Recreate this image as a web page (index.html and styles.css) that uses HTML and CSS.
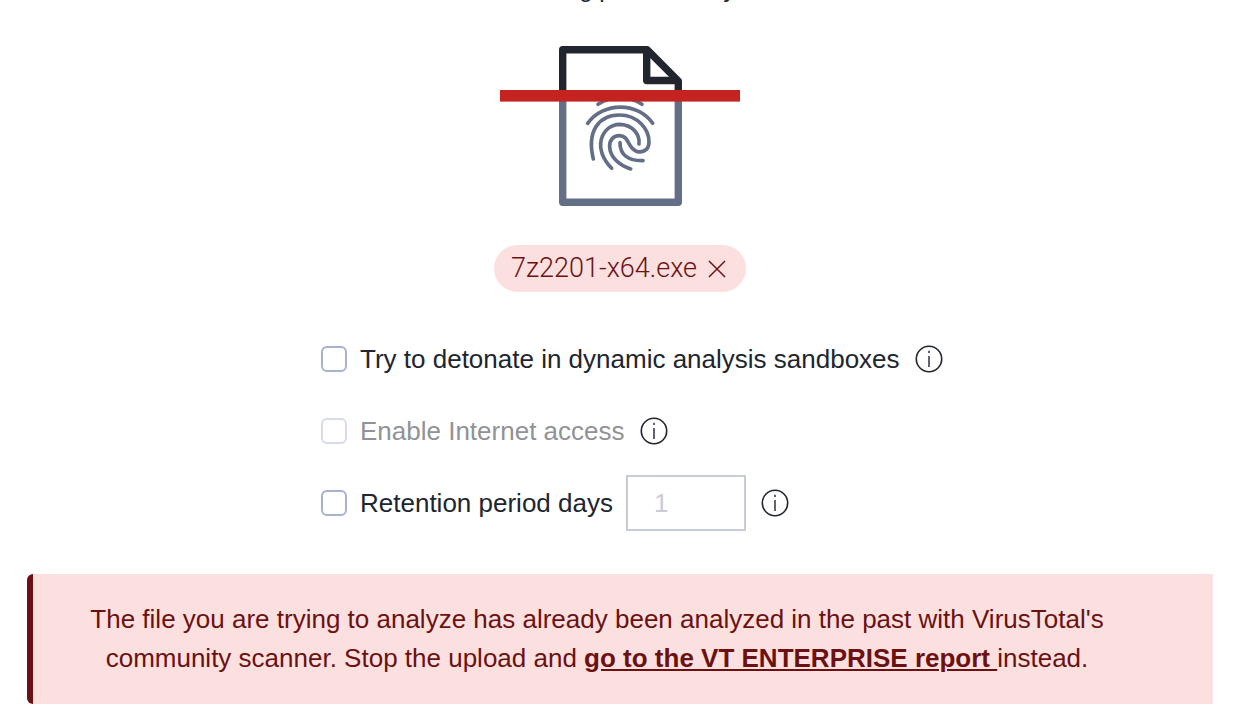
FILE: index.html
```html
<!DOCTYPE html>
<html lang="en">
<head>
    <meta charset="UTF-8">
    <meta name="viewport" content="width=device-width, initial-scale=1.0">
    <title>Private Scanning</title>
    <link rel="stylesheet" href="styles.css">
</head>
<body>
    <!-- Shared icons -->
    <svg class="sprite" aria-hidden="true">
        <symbol id="icon-info" viewBox="0 0 28 28">
            <circle cx="14" cy="14" r="12.7" fill="none" stroke="currentColor" stroke-width="1.6"/>
            <path d="M14 11V22M14 5.8V8" stroke="currentColor" stroke-width="1.4"/>
        </symbol>
    </svg>

    <main class="upload">
        <p class="upload-title">Performing private analysis</p>

        <svg class="scan-icon" viewBox="0 0 240 160" fill="none" aria-hidden="true">
            <defs>
                <linearGradient id="scan" gradientUnits="userSpaceOnUse" x1="0" y1="0" x2="0" y2="160">
                    <stop offset="0.31" stop-color="#20252e"/>
                    <stop offset="0.31" stop-color="#646e87"/>
                </linearGradient>
            </defs>
            <g stroke="url(#scan)" stroke-width="7.4" stroke-linejoin="round">
                <path d="M62.7 3.7H147L178.3 35V156.3H62.7Z"/>
                <path d="M146.7 3.7V34.5H178.3"/>
            </g>
            <g transform="translate(70 39) scale(0.3333)" stroke="#646e87" stroke-width="11" stroke-linecap="round">
                <path d="M84 58Q150 15 216 58"/>
                <path d="M53 115C100 50 203 50 248 115"/>
                <path d="M70 222C50 140 85 90 148 90C205 90 238 135 237 172C236 200 212 202 202 200C170 190 180 152 148 152C130 152 118 165 119 185C120 215 145 240 182 252"/>
                <path d="M125 250C95 220 90 190 92 175C95 140 120 118 150 118C190 120 210 150 207 177"/>
                <path d="M150 173C150 210 175 228 219 227"/>
            </g>
            <rect y="44" width="240" height="11.6" fill="#c52320"/>
        </svg>

        <div class="file-chip">
            <span>7z2201-x64.exe</span>
            <button type="button" class="chip-remove" aria-label="Remove file">
                <svg viewBox="0 0 18 18" stroke="currentColor" stroke-width="1.5">
                    <path d="M1 1L17 17M17 1L1 17"/>
                </svg>
            </button>
        </div>

        <form class="options">
            <div class="option">
                <input type="checkbox" id="detonate">
                <label for="detonate">Try to detonate in dynamic analysis sandboxes</label>
                <svg class="info"><use href="#icon-info"/></svg>
            </div>
            <div class="option">
                <input type="checkbox" id="internet" disabled>
                <label for="internet">Enable Internet access</label>
                <svg class="info"><use href="#icon-info"/></svg>
            </div>
            <div class="option">
                <input type="checkbox" id="retention">
                <label for="retention">Retention period days</label>
                <input type="text" class="days" placeholder="1" aria-label="Days">
                <svg class="info"><use href="#icon-info"/></svg>
            </div>
        </form>

        <div class="alert" role="alert">
            The file you are trying to analyze has already been analyzed in the past with VirusTotal's community scanner. Stop the upload and <a href="#">go to the VT ENTERPRISE report </a>instead.
        </div>
    </main>
</body>
</html>
```
FILE: styles.css
```css
:root {
    --color-text: #20252e;
    --color-text-disabled: #919295;
    --color-border: #c8cbda;
    --color-checkbox: #a6b1cf;
    --color-danger: #6b1111;
    --color-danger-bg: #fbe0df;
}

* {
    margin: 0;
    padding: 0;
    box-sizing: border-box;
}

body {
    font-family: "Liberation Sans", Arial, sans-serif;
    font-size: 26px;
    line-height: 39px;
    color: var(--color-text);
    background: #fff;
}

.sprite {
    position: absolute;
    width: 0;
    height: 0;
}

.upload {
    display: flex;
    flex-direction: column;
    align-items: center;
    padding: 0 23px 18px 27px;
}

.upload-title {
    margin: -31px 0 38px;
    font-size: 24px;
}

.scan-icon {
    width: 240px;
    height: 160px;
}

.file-chip {
    display: flex;
    align-items: center;
    gap: 11px;
    margin: 39px 0;
    padding: 4px 20px 4px 17px;
    border-radius: 24px;
    background: var(--color-danger-bg);
    color: var(--color-danger);
    font-family: Roboto, "Liberation Sans", sans-serif;
    font-size: 27px;
    font-weight: 300;
}

.chip-remove {
    display: flex;
    border: none;
    background: none;
    color: inherit;
    cursor: pointer;
}

.chip-remove svg {
    width: 18px;
    height: 18px;
}

.options {
    display: flex;
    flex-direction: column;
    gap: 16px;
    width: 100%;
    max-width: 598px;
}

.option {
    display: flex;
    align-items: center;
    height: 56px;
    white-space: nowrap;
}

.option input[type="checkbox"] {
    appearance: none;
    flex-shrink: 0;
    width: 26px;
    height: 26px;
    margin-right: 13px;
    border: 2px solid var(--color-checkbox);
    border-radius: 6px;
    background: #fff;
}

.option input[type="checkbox"]:checked {
    background: var(--color-checkbox);
}

.option input[type="checkbox"]:disabled {
    border-color: #d7dbea;
}

.option input:disabled + label {
    color: var(--color-text-disabled);
}

.days {
    width: 120px;
    height: 56px;
    margin-left: 13px;
    padding: 0 26px;
    border: 2px solid var(--color-border);
    font: inherit;
    color: inherit;
}

.days::placeholder {
    color: var(--color-border);
}

.info {
    flex-shrink: 0;
    width: 28px;
    height: 28px;
    margin-left: 15px;
}

.alert {
    align-self: stretch;
    margin-top: 43px;
    padding: 26px 78px 26px 26px;
    border-left: 6px solid var(--color-danger);
    border-radius: 6px 0 0 6px;
    background: var(--color-danger-bg);
    color: var(--color-danger);
    text-align: center;
}

.alert a {
    color: inherit;
    font-weight: bold;
}
```
